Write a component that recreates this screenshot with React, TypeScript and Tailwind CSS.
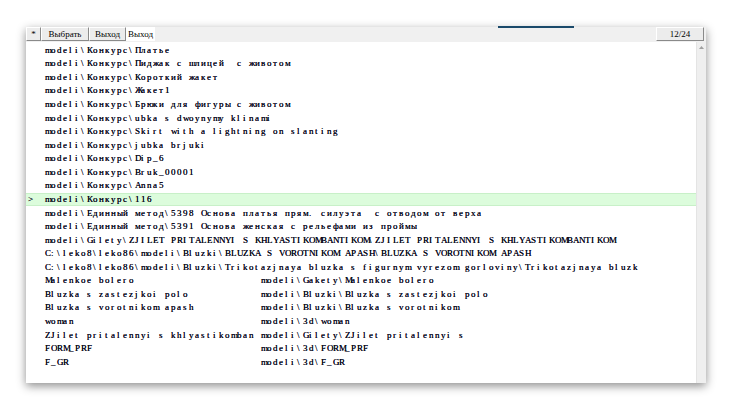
import React from "react";

const pad = (s: string, n: number) => (s.length >= n ? s : s + " ".repeat(n - s.length));

const rows: string[] = [
  "modeli\\Конкурс\\Платье",
  "modeli\\Конкурс\\Пиджак с шлицей  с животом",
  "modeli\\Конкурс\\Короткий жакет",
  "modeli\\Конкурс\\Жакет1",
  "modeli\\Конкурс\\Брюки для фигуры с животом",
  "modeli\\Конкурс\\ubka s dwoynymy klinami",
  "modeli\\Конкурс\\Skirt with a lightning on slanting",
  "modeli\\Конкурс\\jubka brjuki",
  "modeli\\Конкурс\\Dip_6",
  "modeli\\Конкурс\\Bruk_00001",
  "modeli\\Конкурс\\Anna5",
  "modeli\\Конкурс\\116",
  "modeli\\Единный метод\\5398 Основа платья прям. силуэта  с отводом от верха",
  "modeli\\Единный метод\\5391 Основа женская с рельефами из проймы",
  "modeli\\Gilety\\ZJILET PRITALENNYI S KHLYASTIKOMBANTIKOM\\ZJILET PRITALENNYI S KHLYASTIKOMBANTIKOM",
  "C:\\leko8\\leko86\\modeli\\Bluzki\\BLUZKA S VOROTNIKOM APASH\\BLUZKA S VOROTNIKOM APASH",
  "C:\\leko8\\leko86\\modeli\\Bluzki\\Trikotazjnaya bluzka s figurnym vyrezom gorloviny\\Trikotazjnaya bluzk",
  pad("Malenkoe bolero", 36) + "modeli\\Gakety\\Malenkoe bolero",
  pad("Bluzka s zastezjkoi polo", 36) + "modeli\\Bluzki\\Bluzka s zastezjkoi polo",
  pad("Bluzka s vorotnikom apash", 36) + "modeli\\Bluzki\\Bluzka s vorotnikom",
  pad("woman", 36) + "modeli\\3d\\woman",
  pad("ZJilet pritalennyi s khlyastikomban", 36) + "modeli\\Gilety\\ZJilet pritalennyi s",
  pad("FORM_PRF", 36) + "modeli\\3d\\FORM_PRF",
  pad("F_GR", 36) + "modeli\\3d\\F_GR",
];

const SELECTED = 11;

function CellText({ text }: { text: string }) {
  return (
    <span className="flex">
      {Array.from(text).map((ch, i) => (
        <span key={i} className="inline-block w-[6px] shrink-0 overflow-visible whitespace-pre">
          {ch}
        </span>
      ))}
    </span>
  );
}

function Btn({ w, children }: { w: string; children: React.ReactNode }) {
  return (
    <div
      className={`${w} h-[14px] flex items-center justify-center bg-[#ececec] border-t border-l border-t-white border-l-white border-b border-r border-b-[#8a8a8a] border-r-[#8a8a8a] text-[9px] leading-none text-black`}
    >
      {children}
    </div>
  );
}

export default function App() {
  return (
    <div
      className="relative w-[732px] h-[409px] bg-white overflow-hidden"
      style={{ fontFamily: '"Liberation Serif", "Times New Roman", serif' }}
    >
      <div className="absolute left-[498px] top-[26px] w-[76px] h-[2px] bg-[#1b4a6b] z-10" />
      <div className="ml-[26px] pt-[27px]">
        <div className="w-[680px] h-[356px] flex flex-col bg-white shadow-[0_3px_9px_rgba(0,0,0,0.45)]">
          <div className="h-[15px] flex items-start bg-[#f0f0f0]">
            <Btn w="w-[15px]">*</Btn>
            <Btn w="w-[48px]">Выбрать</Btn>
            <Btn w="w-[37px]">Выход</Btn>
            <div className="h-[14px] px-[2px] flex items-center bg-white text-[9px] leading-none text-black">Выход</div>
            <div className="flex-1" />
            <Btn w="w-[48px]">12/24</Btn>
            <div className="w-[2px]" />
          </div>
          <div className="flex-1 flex min-h-0">
            <div className="flex-1 pt-[1.5px] text-[9px] text-[#0b0b1e] leading-none [text-shadow:0_0_0.3px_#0b0b1e]">
              {rows.map((r, i) => (
                <div
                  key={i}
                  className={
                    i === SELECTED
                      ? "h-[13.57px] flex items-center bg-[#dcfcdc] border-y border-[#c8f0c8]"
                      : "h-[13.57px] flex items-center"
                  }
                >
                  <span className="w-[19px] pl-[2px] shrink-0">{i === SELECTED ? ">" : ""}</span>
                  <CellText text={r} />
                </div>
              ))}
            </div>
            <div className="w-[10px] bg-[#efefef] border-l border-[#e4e4e4] flex flex-col items-center pt-[4px]">
              <svg width="5" height="3" viewBox="0 0 5 3">
                <path d="M2.5 0 L5 3 L0 3 Z" fill="#a0a0a0" />
              </svg>
            </div>
          </div>
        </div>
      </div>
    </div>
  );
}
